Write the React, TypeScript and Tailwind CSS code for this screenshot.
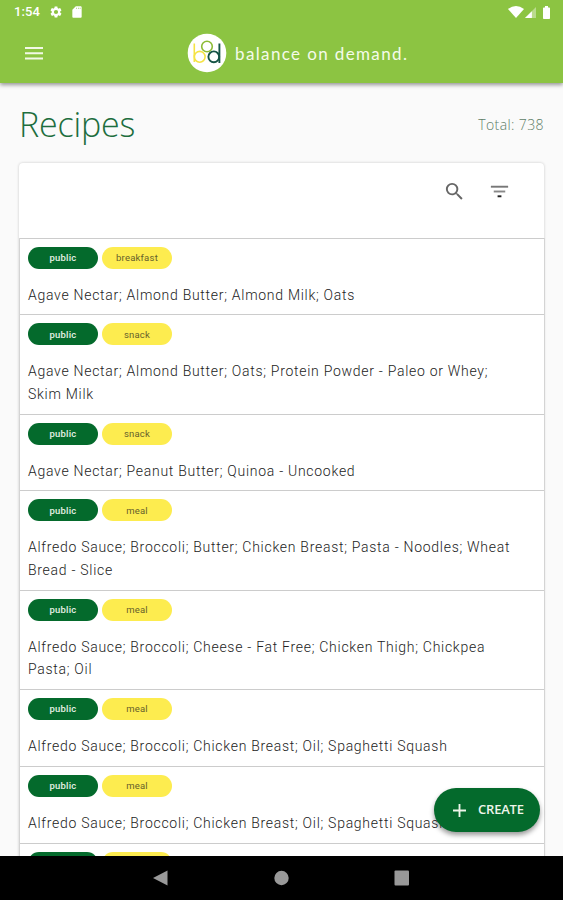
const recipes = [
  { kind: 'breakfast', lines: ['Agave Nectar; Almond Butter; Almond Milk; Oats'] },
  { kind: 'snack', lines: ['Agave Nectar; Almond Butter; Oats; Protein Powder - Paleo or Whey;', 'Skim Milk'] },
  { kind: 'snack', lines: ['Agave Nectar; Peanut Butter; Quinoa - Uncooked'] },
  { kind: 'meal', lines: ['Alfredo Sauce; Broccoli; Butter; Chicken Breast; Pasta - Noodles; Wheat', 'Bread - Slice'] },
  { kind: 'meal', lines: ['Alfredo Sauce; Broccoli; Cheese - Fat Free; Chicken Thigh; Chickpea', 'Pasta; Oil'] },
  { kind: 'meal', lines: ['Alfredo Sauce; Broccoli; Chicken Breast; Oil; Spaghetti Squash'] },
  { kind: 'meal', lines: ['Alfredo Sauce; Broccoli; Chicken Breast; Oil; Spaghetti Squash'] },
];

function StatusBar() {
  return (
    <div className="flex h-6 items-center pl-[14px] pr-[13px] text-white">
      <span className="font-[Roboto,sans-serif] text-[13px] leading-6 font-medium tracking-[0.1px]">1:54</span>
      <svg className="ml-[9px] size-[14px]" viewBox="0 0 24 24" fill="currentColor">
        <path d="M19.14 12.94c.04-.3.06-.61.06-.94 0-.32-.02-.64-.07-.94l2.03-1.58c.18-.14.23-.41.12-.61l-1.92-3.32c-.12-.22-.37-.29-.59-.22l-2.39.96c-.5-.38-1.03-.7-1.62-.94L14.4 2.81c-.04-.24-.24-.41-.48-.41h-3.84c-.24 0-.43.17-.47.41L9.25 5.35c-.59.24-1.13.57-1.62.94l-2.39-.96c-.22-.08-.47 0-.59.22L2.74 8.87c-.12.21-.08.47.12.61l2.03 1.58c-.05.3-.09.63-.09.94s.02.64.07.94l-2.03 1.58c-.18.14-.23.41-.12.61l1.92 3.32c.12.22.37.29.59.22l2.39-.96c.5.38 1.03.7 1.62.94l.36 2.54c.05.24.24.41.48.41h3.84c.24 0 .44-.17.47-.41l.36-2.54c.59-.24 1.13-.56 1.62-.94l2.39.96c.22.08.47 0 .59-.22l1.92-3.32c.12-.22.07-.47-.12-.61l-2.01-1.58zM12 15.6A3.6 3.6 0 1 1 12 8.4a3.6 3.6 0 0 1 0 7.2z" />
      </svg>
      <svg className="ml-[7px] size-[14px]" viewBox="0 0 24 24" fill="currentColor">
        <path d="M18 2h-8L4 8v12c0 1.1.9 2 2 2h12c1.1 0 2-.9 2-2V4c0-1.100-.9-2-2-2zm-6 4.500h-1.300V4.500H12zm3 0h-1.300V4.500H15zm3 0h-1.300V4.500H18z" />
      </svg>
      <svg className="ml-auto h-[12px] w-[16px]" viewBox="0 0 16 12" fill="currentColor">
        <path d="M0 3Q8 -3 16 3L8 12Z" />
      </svg>
      <svg className="ml-[1px] h-[11px] w-[11px]" viewBox="0 0 12 12" fill="currentColor">
        <path d="M12 0V12H0Z" opacity=".4" />
        <path d="M7.500 4.500V12H0Z" />
      </svg>
      <svg className="ml-[7px] h-[13px] w-[7px]" viewBox="0 0 7 13" fill="currentColor">
        <path d="M2 0h3v1.500h1.200q.8 0 .8.800v9.900q0 .8-.8.800H.800Q0 13 0 12.200V2.300q0-.8.800-.8H2z" />
      </svg>
    </div>
  );
}

function Logo() {
  return (
    <svg className="size-[40px] shrink-0" viewBox="0 0 40 40" fill="none" strokeWidth="1.600">
      <circle cx="20" cy="20" r="19.300" fill="#fff" />
      <g stroke="#f5e345">
        <path d="M7.300 10.500V29" />
        <circle cx="12.700" cy="23.800" r="5.400" />
      </g>
      <circle cx="20" cy="13.500" r="5.300" stroke="#8dbb35" />
      <g stroke="#155445" strokeWidth="1.900">
        <circle cx="26.800" cy="23.800" r="5.400" />
        <path d="M32.400 10.500V30" />
      </g>
    </svg>
  );
}

function Pill({ label, tone }: { label: string; tone: 'green' | 'yellow' }) {
  return (
    <span
      className={
        'flex h-[22px] w-[70px] items-center justify-center rounded-full text-[9.5px] leading-none tracking-[0.22px] ' +
        (tone === 'green' ? 'bg-[#046a2c] font-medium text-[#e4f0e5]' : 'bg-[#fdec4f] text-[#665f2c]')
      }
    >
      {label}
    </span>
  );
}

export default function App() {
  return (
    <div className="relative flex h-[900px] w-full flex-col overflow-hidden bg-[#fafafa] font-[Roboto,sans-serif]">
      <header className="z-10 h-[83px] shrink-0 bg-[#8cc442] shadow-[0_2px_4px_rgba(0,0,0,0.4)]">
        <StatusBar />
        <div className="flex h-[58px] items-center pl-[25px]">
          <svg className="h-[13px] w-[18px]" viewBox="0 0 18 13" fill="#f2f9e6">
            <path d="M0 0h18v2H0zM0 5.300h18v2H0zM0 10.600h18v2H0z" />
          </svg>
          <div className="ml-[144px] flex items-center gap-[8px]">
            <Logo />
            <span className="pt-[2px] font-[Lato,sans-serif] text-[17px] tracking-[1.37px] whitespace-nowrap text-[#f5fbea]">
              balance on demand.
            </span>
          </div>
        </div>
      </header>

      <main className="flex min-h-0 flex-1 flex-col overflow-hidden px-[19px] font-['Open_Sans',sans-serif]">
        <div className="flex h-[80px] shrink-0 items-center justify-between pt-[2px] text-[#1d6e3e]">
          <h1 className="text-[34px] leading-[44px] font-light tracking-[-0.2px]">Recipes</h1>
          <span className="text-[14px] font-light tracking-[0.4px] text-[#5d7d66]">Total: 738</span>
        </div>
        <section className="shrink-0 rounded-t-[4px] bg-white shadow-[0_0_3px_rgba(0,0,0,0.2)]">
          <div className="flex h-[74.500px] items-start justify-end gap-[22px] pt-[17px] pr-[33px]">
            <svg className="size-[23px]" viewBox="0 0 24 24" fill="#666">
              <path d="M15.500 14h-.79l-.28-.27A6.470 6.470 0 0 0 16 9.500 6.500 6.500 0 1 0 9.500 16c1.610 0 3.090-.59 4.230-1.570l.27.28v.79l5 4.990L20.490 19zm-6 0A4.500 4.500 0 1 1 14 9.500 4.500 4.500 0 0 1 9.500 14z" />
            </svg>
            <svg className="size-[23px]" viewBox="0 0 24 24">
              <path d="M3 6h18v2H3z" fill="#777" />
              <path d="M6 11h12v2H6z" fill="#888" />
              <path d="M10 16h4v2h-4z" fill="#222" />
            </svg>
          </div>
          <div className="-mr-px border-x border-[#d4d4d4] font-[Roboto,sans-serif]">
            {recipes.map((r, i) => (
              <article key={i} className="border-t border-[#ccc] px-[8px] pt-[8px] pb-[8.2px]">
                <div className="flex gap-[4px]">
                  <Pill label="public" tone="green" />
                  <Pill label={r.kind} tone="yellow" />
                </div>
                <div className="mt-[15px] text-[14px] leading-[22.6px] font-light tracking-[0.72px] text-[#222]">
                  {r.lines.map((line) => (
                    <p key={line} className="whitespace-nowrap">{line}</p>
                  ))}
                </div>
              </article>
            ))}
            <article className="flex gap-[4px] border-t border-[#ccc] px-[8px] pt-[8px]">
              <span className="h-[22px] w-[70px] rounded-full bg-[#046a2c]" />
              <span className="h-[22px] w-[70px] rounded-full bg-[#fdec4f]" />
            </article>
          </div>
        </section>
      </main>

      <button className="absolute top-[788px] left-[434px] z-10 flex h-[44px] w-[106px] items-center rounded-full bg-[#046a2c] pl-[19px] font-['Open_Sans',sans-serif] text-[13px] font-semibold tracking-[-0.2px] text-[#eef5ea] shadow-[0_3px_5px_rgba(0,0,0,0.4)]">
        <svg className="mr-[12px] size-[13px]" viewBox="0 0 14 14" stroke="currentColor" strokeWidth="2">
          <path d="M7 0V14M0 7H14" />
        </svg>
        CREATE
      </button>

      <nav className="h-[44px] shrink-0 bg-black">
        <svg className="h-full w-full" viewBox="0 0 563 44" fill="#999">
          <path d="M153 22L167.500 14.500V29.500Z" />
          <circle cx="281.500" cy="22" r="7.200" />
          <rect x="394.500" y="14.500" width="14.500" height="15" rx="1" />
        </svg>
      </nav>
    </div>
  );
}
